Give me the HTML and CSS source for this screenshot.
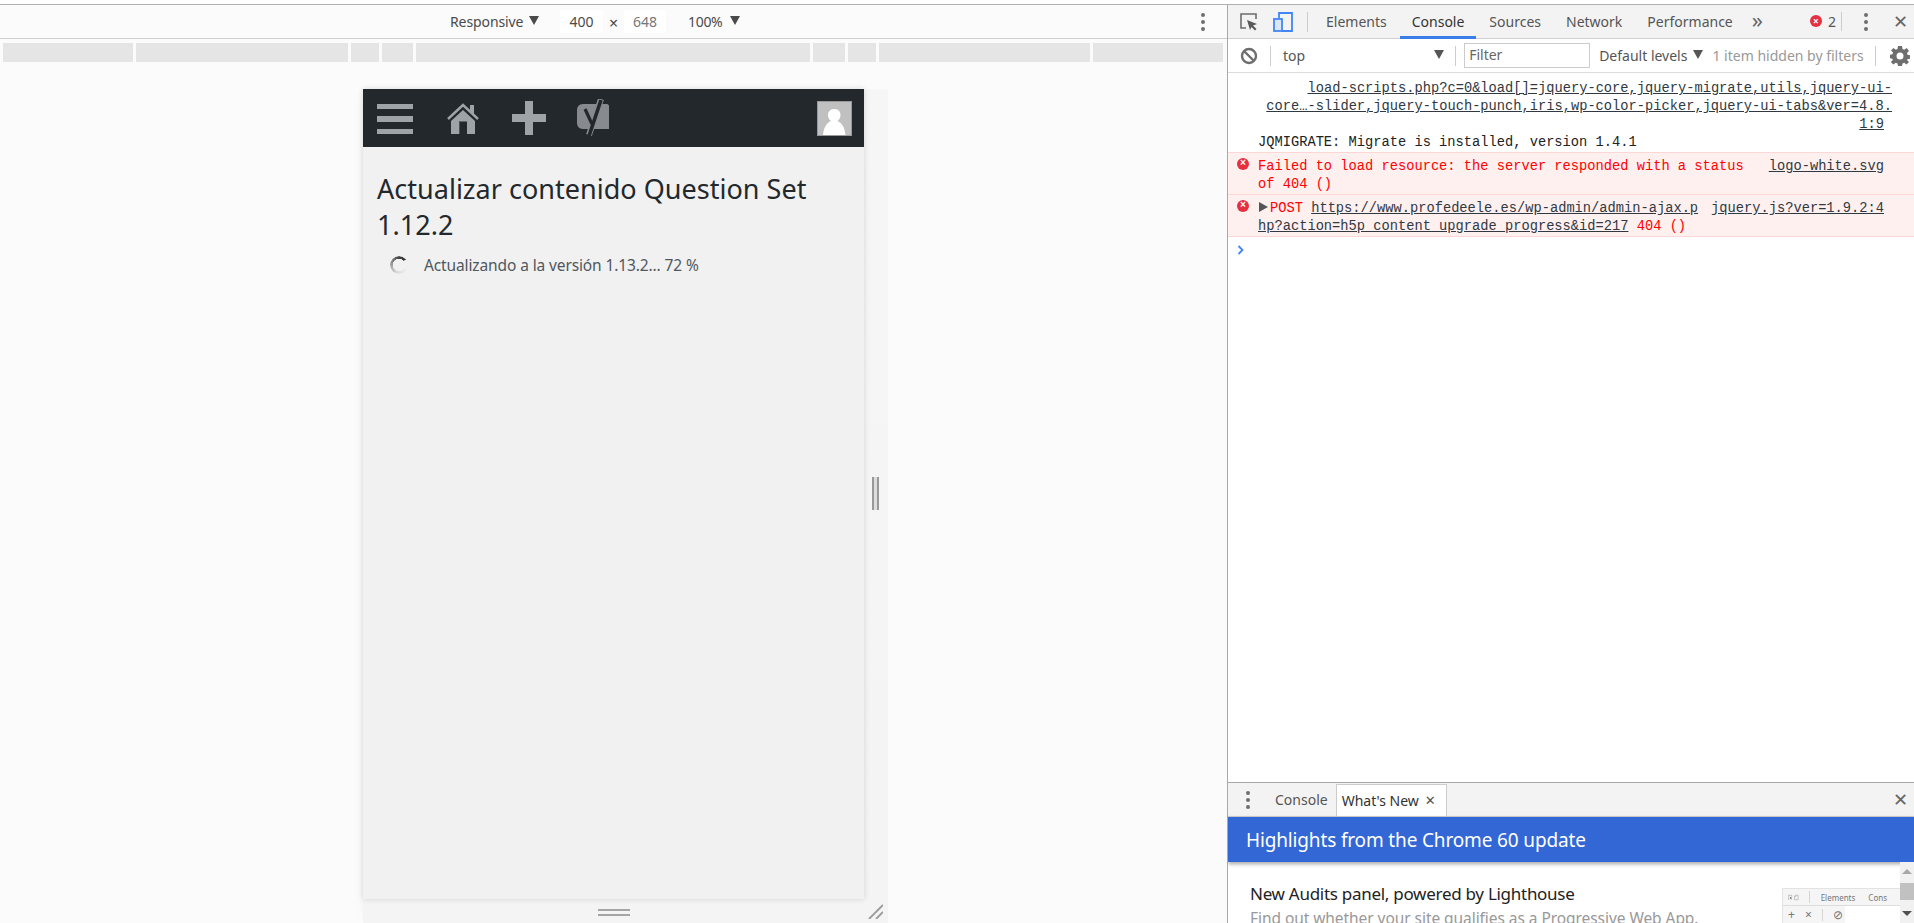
FILE: index.html
```html
<!DOCTYPE html>
<html lang="es">
<head>
<meta charset="utf-8">
<title>DevTools</title>
<link rel="stylesheet" href="styles.css">
</head>
<body>
<div class="topline"></div>
<div class="main">
  <section class="device">
    <div class="dev-toolbar">
      <span class="dt-resp">Responsive</span><span class="tri dt-tri1"></span>
      <span class="dim dim-w">400</span><span class="dt-x">×</span><span class="dim dim-h">648</span>
      <span class="dt-zoom">100%</span><span class="tri dt-tri2"></span>
      <span class="kebab dt-kebab"><i></i><i></i><i></i></span>
    </div>
    <div class="media-bar">
      <i class="m1"></i><i class="m2"></i><i class="m3"></i><i class="m4"></i><i class="m5"></i><i class="m6"></i><i class="m7"></i><i class="m8"></i><i class="m9"></i>
    </div>
    <div class="stage">
      <div class="frame">
        <div class="viewport">
          <header class="wpbar">
            <svg class="ic-menu" width="36" height="30" viewBox="0 0 36 30"><path fill="#9ea3a8" d="M0 0h36v5H0zM0 12h36v6H0zM0 25h36v5H0z"/></svg>
            <svg class="ic-home" width="32" height="32" viewBox="0 0 32 32"><path fill="#9ea3a8" d="M4 19L16 8l12 11v13h-8V20h-8v12H4z"/><path fill="none" stroke="#9ea3a8" stroke-width="2.400" d="M1 17L16 3l15 14"/><path fill="#9ea3a8" d="M23 3h4v10l-4-4z"/><path fill="#1f5f86" d="M12 19h1v13h-1z"/><path fill="#23282d" d="M13 19.500h7V32h-7z"/></svg>
            <svg class="ic-plus" width="34" height="34" viewBox="0 0 34 34"><path fill="#9ea3a8" d="M13 0h8v13h13v8H21v13h-8V21H0v-8h13z"/></svg>
            <svg class="ic-yoast" width="32" height="38" viewBox="0 0 32 38"><path fill="#878b8e" d="M6 5h24c1 0 2 1 2 2v23H6C2 30 0 27 0 24V11c0-3 2-6 6-6z"/><path fill="none" stroke="#878b8e" stroke-width="6" d="M24 0L12 36"/><path fill="none" stroke="#23282d" stroke-width="3.200" d="M8 10l7 15"/><path fill="none" stroke="#23282d" stroke-width="3.600" d="M24 1L12 37"/></svg>
            <span class="avatar"><svg width="33" height="33" viewBox="0 0 33 33"><path fill="#fff" d="M16.500 7c4 0 6 3 6 6 0 3-1.500 5-3 6 4 2 7 5 8 14H5c1-9 4-12 8-14-1.500-1-3-3-3-6 0-3 2-6 6.500-6z"/></svg></span>
          </header>
          <div class="vp-body">
            <h1>Actualizar contenido Question Set 1.12.2</h1>
            <p class="progress"><span class="spinner"></span><span>Actualizando a la versión 1.13.2... 72 %</span></p>
          </div>
        </div>
        <span class="grip-side"></span>
        <span class="grip-bottom"></span>
        <svg class="grip-corner" width="15" height="15" viewBox="0 0 15 15"><path fill="none" stroke="#9a9a9a" stroke-width="1.800" d="M1 15L15 1M8 15l7-7"/></svg>
      </div>
    </div>
  </section>

  <section class="devtools">
    <div class="tabs-row">
      <svg class="t-inspect" width="18" height="18" viewBox="0 0 18 18"><path fill="none" stroke="#6e6e6e" stroke-width="1.600" d="M6 15H1V1h15v5"/><path fill="#5a5a5a" d="M7 7l10 4-4 1.500 3.500 3.500-1.500 1.500-3.500-3.500L10 17z"/></svg>
      <svg class="t-device" width="20" height="20" viewBox="0 0 20 20"><path fill="none" stroke="#4285f4" stroke-width="1.800" d="M6 6V1h13v18H9"/><rect x="1" y="7" width="8" height="12" fill="#dbe6fa" stroke="#4285f4" stroke-width="1.800"/></svg>
      <span class="t-sep t-sep1"></span>
      <span class="tab t-elements">Elements</span>
      <span class="tab tab-on">Console</span>
      <span class="tab">Sources</span>
      <span class="tab">Network</span>
      <span class="tab">Performance</span>
      <span class="t-more">»</span>
      <span class="err-dot t-err">×</span><span class="t-count">2</span>
      <span class="t-sep t-sep2"></span>
      <span class="kebab t-kebab"><i></i><i></i><i></i></span>
      <span class="t-close">✕</span>
    </div>
    <div class="console-bar">
      <svg class="c-block" width="18" height="18" viewBox="0 0 18 18"><circle cx="9" cy="9" r="7" fill="none" stroke="#6e6e6e" stroke-width="2.400"/><path stroke="#6e6e6e" stroke-width="2.400" d="M4 4l10 10"/></svg>
      <span class="t-sep c-sep1"></span>
      <span class="c-top">top</span>
      <span class="tri c-tri1"></span>
      <span class="t-sep c-sep2"></span>
      <span class="c-filter">Filter</span>
      <span class="c-levels">Default levels</span>
      <span class="tri c-tri2"></span>
      <span class="c-hidden">1 item hidden by filters</span>
      <span class="t-sep c-sep3"></span>
      <svg class="c-gear" width="20" height="20" viewBox="0 0 20 20"><path fill="#6e6e6e" fill-rule="evenodd" d="M8 0h4l.5 3 1.700.7L16.700 2 19 5l-2 2 .5 1.800 2.500.5v3.400l-2.500.5L17 14l2 2-2.500 2.500-2.300-1.800-1.700.7L12 20H8l-.5-2.600-1.700-.7L3.300 18.500.8 16l2-2-.5-1.300-2.300-.5V8.800l2.500-.5L3 6.500 1 4.500 3.500 2l2.300 1.700 1.700-.7zM10 6.500a3.500 3.500 0 1 0 0 7 3.500 3.500 0 0 0 0-7z"/></svg>
    </div>
    <div class="console-log">
      <div class="msg msg-info">
        <a class="wide">load-scripts.php?c=0&amp;load[]=jquery-core,jquery-migrate,utils,jquery-ui-</a>
        <a class="wide">core…-slider,jquery-touch-punch,iris,wp-color-picker,jquery-ui-tabs&amp;ver=4.8.</a>
        <a>1:9</a>
      </div>
      <div class="msg msg-plain">JQMIGRATE: Migrate is installed, version 1.4.1</div>
      <div class="msg msg-err">
        <span class="err-dot m-dot">×</span>
        <div class="line"><span>Failed to load resource: the server responded with a status</span><a>logo-white.svg</a></div>
        <div class="line"><span>of 404 ()</span></div>
      </div>
      <div class="msg msg-err msg-err2">
        <span class="err-dot m-dot">×</span>
        <div class="line"><span><b class="expand"></b>POST <a>https://www.profedeele.es/wp-admin/admin-ajax.p</a></span><a>jquery.js?ver=1.9.2:4</a></div>
        <div class="line"><span><a>hp?action=h5p_content_upgrade_progress&amp;id=217</a> 404 ()</span></div>
      </div>
      <svg class="prompt" width="7" height="10" viewBox="0 0 7 10"><path fill="none" stroke="#4285f4" stroke-width="1.800" d="M1.500 1l4 4-4 4"/></svg>
    </div>
    <div class="drawer">
      <div class="drawer-tabs">
        <span class="kebab d-kebab"><i></i><i></i><i></i></span>
        <span class="d-console">Console</span>
        <span class="d-new">What's New<b>✕</b></span>
        <span class="t-close d-close">✕</span>
      </div>
      <div class="wn-head">Highlights from the Chrome 60 update</div>
      <div class="wn-body">
        <div class="wn-text">
          <h2>New Audits panel, powered by Lighthouse</h2>
          <p>Find out whether your site qualifies as a Progressive Web App.</p>
        </div>
        <div class="wn-shot">
          <div class="shot-row">
            <svg class="s-icons" width="26" height="11" viewBox="0 0 26 11"><path fill="none" stroke="#888" d="M4 9H.5V.5h8V4M16.500 3V.5h6v10h-8V3h4"/><path fill="#777" d="M4 4l5 2-2 1 2 2-1 1-2-2-1 2z"/></svg>
            <span class="s-sep"></span>
            <span class="s-tab">Elements</span><span class="s-tab">Cons</span>
          </div>
          <div class="shot-row2"><span>+</span><span>×</span><span class="s-sep s-sep2"></span><span>⊘</span></div>
        </div>
        <div class="wn-scroll"><span class="sb-up"></span><span class="sb-thumb"></span><span class="sb-down"></span></div>
      </div>
    </div>
  </section>
</div>
</body>
</html>
```
FILE: styles.css
```css
* { box-sizing: border-box; }
html, body { margin: 0; height: 923px; overflow: hidden; background: #fff; }
body { font-family: "Noto Sans", "Open Sans", sans-serif; font-size: 13px; color: #333; }
.topline { height: 5px; border-bottom: 1px solid #b0b0b0; }
.main { display: flex; height: 918px; }

.device { width: 1228px; flex: none; background: #fbfbfb; border-right: 1px solid #a8a8a8; }
.dev-toolbar { height: 34px; display: flex; align-items: center; border-bottom: 1px solid #cfcfcf; padding-left: 450px; font-size: 14px; color: #4a4a4a; }
.tri { display: inline-block; width: 0; height: 0; flex: none; border-left: 5px solid transparent; border-right: 5px solid transparent; border-top: 9px solid #4a4a4a; }
.dt-resp { width: 74px; flex: none; white-space: nowrap; letter-spacing: -0.1px; }
.dt-tri1 { margin: -2px 0 0 5px; }
.dim { width: 43px; height: 23px; flex: none; background: #fff; display: flex; align-items: center; justify-content: center; border-radius: 2px; }
.dim-w { margin-left: 21px; }
.dim-h { width: 42px; color: #777; }
.dt-x { width: 21px; flex: none; text-align: center; font-size: 16px; padding-top: 3px; }
.dt-zoom { margin-left: 22px; width: 35px; flex: none; letter-spacing: -0.3px; white-space: nowrap; }
.dt-tri2 { margin: -2px 0 0 7px; }
.kebab { display: flex; flex-direction: column; gap: 3px; width: 4px; flex: none; }
.kebab i { width: 4px; height: 4px; border-radius: 50%; background: #6e6e6e; }
.dt-kebab { margin-left: auto; margin-right: 22px; }

.media-bar { display: flex; gap: 3px; height: 19px; margin: 4px 4px 0 3px; }
.media-bar i { background: #e5e5e5; display: block; }
.m1 { width: 130px; } .m2 { width: 212px; } .m3 { width: 28px; } .m4 { width: 31px; } .m5 { width: 394px; } .m6 { width: 32px; } .m7 { width: 28px; } .m8 { width: 211px; } .m9 { width: 130px; }

.stage { padding: 27px 0 0 363px; }
.frame { position: relative; width: 525px; height: 834px; background: linear-gradient(#f6f6f6, #f4f4f4); box-shadow: -8px 0 12px -8px rgba(0,0,0,.04); }
.viewport { width: 501px; height: 810px; background: #f1f1f1; box-shadow: 0 0 6px rgba(0,0,0,.14); }
.wpbar { height: 58px; background: #23282d; display: flex; align-items: center; padding-left: 14px; }
.ic-menu { margin-top: 1px; }
.ic-home { margin: -1px 0 0 34px; }
.ic-plus { margin-left: 33px; }
.ic-yoast { margin-left: 31px; }
.avatar { margin-left: auto; margin-right: 12px; width: 35px; height: 35px; background: #c0c0c0; border: 1px solid #999; display: block; margin-top: 1px; }
.avatar svg { display: block; }
.vp-body { padding: 24px 14px 0; }
h1 { margin: 0; font-size: 27px; font-weight: 400; line-height: 36px; color: #23282d; letter-spacing: 0.02px; }
.progress { margin: 11px 0 0 13px; display: flex; align-items: center; font-size: 15.500px; color: #50575e; letter-spacing: -0.12px; height: 22px; }
.spinner { width: 18px; height: 18px; border-radius: 50%; flex: none; margin-right: 16px; background: conic-gradient(from 100deg, #f1f1f1 0deg, #dedede 90deg, #999 180deg, #444 260deg, #333 310deg, #f1f1f1 311deg); -webkit-mask: radial-gradient(circle, transparent 6px, #000 6.500px); mask: radial-gradient(circle, transparent 6px, #000 6.500px); }
.grip-side { position: absolute; left: 509px; top: 388px; width: 7px; height: 33px; border: solid #999; border-width: 0 2px; background: #ddd; }
.grip-bottom { position: absolute; left: 235px; top: 820px; width: 32px; height: 7px; border-top: 2px solid #a5a5a5; border-bottom: 2px solid #a5a5a5; }
.grip-corner { position: absolute; left: 505px; top: 815px; }

.devtools { flex: 1; display: flex; flex-direction: column; background: #fff; min-width: 0; }
.tabs-row { height: 34px; flex: none; background: #f3f3f3; border-bottom: 1px solid #cfcfcf; display: flex; align-items: center; gap: 0; padding-left: 12px; font-size: 14px; color: #555; }
.t-device { margin-left: 15px; }
.t-sep { width: 1px; height: 20px; background: #ccc; display: block; flex: none; }
.t-sep1 { margin-left: 14px; }
.tab { display: block; margin-left: 25px; white-space: nowrap; }
.t-elements { margin-left: 18px; }
.tab-on { position: relative; color: #333; }
.tab-on::after { content: ""; position: absolute; left: -12px; right: -12px; bottom: -8px; height: 3px; background: #3b7de9; }
.t-more { margin-left: 19px; font-size: 22px; color: #666; line-height: 1; margin-top: -5px; }
.err-dot { display: inline-flex; align-items: center; justify-content: center; width: 12px; height: 12px; border-radius: 50%; background: #e4303f; color: #fff; font-size: 10px; font-weight: 700; line-height: 1; flex: none; }
.t-err { margin-left: auto; margin-top: -2px; }
.t-count { margin-left: 6px; }
.t-sep2 { margin-left: 5px; height: 19px; }
.t-kebab { margin-left: 22px; }
.t-close { font-size: 18px; color: #666; margin-left: 25px; margin-right: 6px; width: 15px; text-align: center; font-family: "DejaVu Sans", sans-serif; line-height: 1; }

.console-bar { height: 34px; flex: none; border-bottom: 1px solid #dcdcdc; display: flex; align-items: center; padding-left: 12px; font-size: 14px; color: #555; background: #fff; }
.c-sep1 { margin-left: 12px; }
.c-top { margin-left: 12px; }
.c-tri1 { margin-left: 129px; margin-top: -3px; border-top-color: #555; }
.c-sep2 { margin-left: 11px; }
.c-filter { margin-left: 8px; width: 126px; height: 25px; border: 1px solid #ccc; padding-left: 4px; line-height: 22px; color: #666; flex: none; }
.c-levels { margin-left: 9px; white-space: nowrap; }
.c-tri2 { margin-left: 6px; margin-top: -3px; border-top-color: #555; }
.c-hidden { margin-left: 9px; color: #999; white-space: nowrap; }
.c-sep3 { margin-left: 11px; }
.c-gear { margin-left: auto; margin-right: 4px; flex: none; }

.console-log { flex: 1; font-family: "Liberation Mono", monospace; font-size: 13.730px; line-height: 18px; color: #303942; padding-top: 7px; position: relative; min-height: 0; }
.console-log a { color: #303942; text-decoration: underline; }
.msg { padding-right: 30px; }
.msg-info { display: flex; flex-direction: column; align-items: flex-end; height: 54px; }
.msg-info a.wide { margin-right: -8px; white-space: nowrap; }
.msg-plain { padding-left: 30px; color: #222; white-space: nowrap; height: 18px; }
.msg-err { position: relative; background: #fff0f0; color: #f00; border-top: 1px solid #ffd6d6; padding: 5px 30px 1px 30px; height: 42px; white-space: nowrap; }
.msg-err2 { border-bottom: 1px solid #ffd6d6; height: 43px; }
.line { display: flex; justify-content: space-between; height: 18px; }
.m-dot { position: absolute; left: 9px; top: 5px; }
.expand { display: inline-block; width: 0; height: 0; border-left: 9px solid #555; border-top: 5px solid transparent; border-bottom: 5px solid transparent; margin: 0 2px 0 1px; }
.prompt { position: absolute; left: 9px; top: 172px; }

.drawer { height: 141px; flex: none; border-top: 1px solid #a8a8a8; overflow: hidden; display: flex; flex-direction: column; }
.drawer-tabs { height: 34px; flex: none; background: #f3f3f3; border-bottom: 1px solid #cfcfcf; display: flex; align-items: center; padding-left: 18px; font-size: 14px; color: #555; }
.d-console { margin-left: 25px; }
.d-new { margin-left: 8px; align-self: flex-end; height: 32px; width: 111px; flex: none; background: #fff; border: 1px solid #ccc; border-bottom: none; display: flex; align-items: center; padding-left: 5px; color: #333; white-space: nowrap; }
.d-new b { margin-left: 6px; font-size: 13px; font-weight: 400; color: #555; font-family: "DejaVu Sans", sans-serif; }
.d-close { margin-left: auto; }
.wn-head { height: 45px; flex: none; background: #3367d6; color: #fff; display: flex; align-items: center; padding-left: 18px; font-size: 19px; letter-spacing: -0.15px; box-shadow: 0 2px 4px rgba(0,0,0,.35); position: relative; }
.wn-body { flex: 1; display: flex; position: relative; min-height: 0; }
.wn-text { flex: 1; padding: 20px 0 0 22px; }
.wn-text h2 { margin: 0; font-size: 17px; font-weight: 400; line-height: 24px; color: #222; letter-spacing: -0.28px; white-space: nowrap; }
.wn-text p { margin: 1px 0 0; font-size: 15.500px; color: #999; line-height: 22px; letter-spacing: -0.06px; white-space: nowrap; }
.wn-shot { width: 118px; flex: none; margin-top: 26px; border: 1px solid #e3e3e3; border-right: none; border-bottom: none; height: 35px; font-size: 8px; color: #777; overflow: hidden; background: #fff; }
.shot-row { display: flex; height: 17px; align-items: center; padding-left: 5px; background: #f5f5f5; white-space: nowrap; border-bottom: 1px solid #ddd; }
.s-sep { width: 1px; height: 12px; background: #d5d5d5; flex: none; margin: 0 11px 0 9px; }
.s-tab { margin-right: 13px; }
.shot-row2 { display: flex; align-items: center; gap: 10px; padding-left: 5px; font-size: 12px; line-height: 16px; background: #f5f5f5; width: 62px; height: 17px; }
.s-sep2 { margin: 0; }
.wn-scroll { width: 14px; flex: none; background: #f1f1f1; display: flex; flex-direction: column; align-items: center; padding-top: 7px; }
.sb-up { width: 0; height: 0; border: 5px solid transparent; border-top: none; border-bottom: 5px solid #a8a8a8; }
.sb-thumb { width: 14px; height: 17px; background: #c1c1c1; margin-top: 9px; }
.sb-down { width: 0; height: 0; border: 5px solid transparent; border-bottom: none; border-top: 5px solid #505050; margin-top: 11px; }
```
